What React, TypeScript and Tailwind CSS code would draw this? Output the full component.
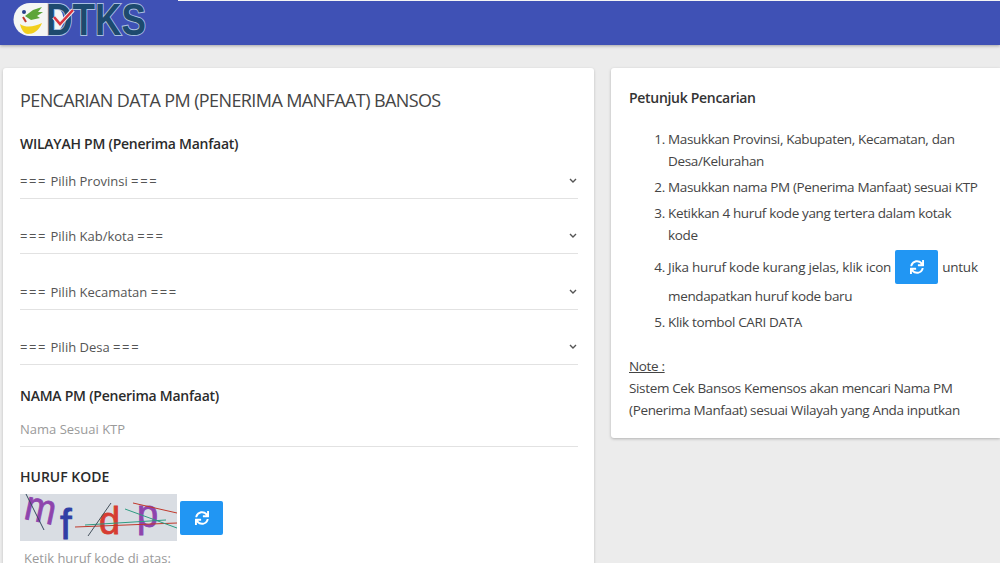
import { FaSync } from 'react-icons/fa';

const FONT = "font-['Open_Sans','Noto_Sans',sans-serif]";

const SELECTS = ['Pilih Provinsi', 'Pilih Kab/kota', 'Pilih Kecamatan', 'Pilih Desa'];

const Logo = () => (
  <svg width="150" height="40" viewBox="0 0 150 40" className="block overflow-visible">
    <rect x="13.5" y="3" width="50" height="33" rx="16.5" fill="#f4f6f4" />
    <path d="M25 16 L33 10 L42 7 L38 12 L43 12 L37 16 L40 18 L31 20 Z" fill="#5da53a" />
    <circle cx="24" cy="12" r="2" fill="#27408b" />
    <path d="M23 17 L26 22" stroke="#c0392b" strokeWidth="2" />
    <path d="M20 24 C26 28 34 27 42 23 C39 31 33 34 28 34 C24 34 21 29 20 24 Z" fill="#f2cf1d" />
    <text x="46" y="35" fontFamily="'Liberation Sans', sans-serif" fontWeight="700" fontSize="45" textLength="100" lengthAdjust="spacingAndGlyphs" fill="#1d4a6e" stroke="#a9bfe0" strokeWidth="2" paintOrder="stroke">
      DTKS
    </text>
    <path d="M54 17 L60 24 L73 10" fill="none" stroke="#f0f0f0" strokeWidth="4.5" />
    <path d="M54 17 L60 24 L73 10" fill="none" stroke="#d8343f" strokeWidth="2.5" />
  </svg>
);

const Captcha = () => (
  <svg width="157" height="47" viewBox="0 0 157 47" className="block overflow-visible bg-[#d9dde3]">
    <g fontFamily="'Liberation Sans', sans-serif" strokeWidth="0.8">
      <text x="4" y="27" fontSize="42" fill="#8e44ad" stroke="#8e44ad" transform="rotate(12 15 20)" textLength="31" lengthAdjust="spacingAndGlyphs">m</text>
      <text x="40" y="45" fontSize="42" fill="#2f3fa5" stroke="#2f3fa5">f</text>
      <text x="79" y="40" fontSize="38" fill="#d63c32" stroke="#d63c32">d</text>
      <text x="117" y="33" fontSize="38" fill="#8e44ad" stroke="#8e44ad">p</text>
    </g>
    <g fill="none" strokeWidth="1">
      <path d="M6 0 L24 36" stroke="#34495e" />
      <path d="M55 33 L157 29" stroke="#c0392b" />
      <path d="M65 31 L146 26" stroke="#2e9c82" />
      <path d="M68 42 L91 9" stroke="#44505c" />
      <path d="M113 9 L157 19" stroke="#c0392b" />
      <path d="M105 15 L157 34" stroke="#2e9c82" />
    </g>
  </svg>
);

const RefreshButton = ({ className }: { className: string }) => (
  <span className={`inline-flex items-center justify-center rounded-[2px] bg-[#2196f3] text-white text-[14px] ${className}`}>
    <FaSync />
  </span>
);

export default function App() {
  return (
    <div className={`${FONT} h-[563px] w-[1000px] overflow-hidden bg-[#ececec] text-[#444]`}>
      <header className="h-[45px] border-t border-[#f4f4f4] bg-[#3f51b5] shadow-[0_1px_3px_rgba(0,0,0,0.3)]">
        <div className="-mt-px h-[44px] w-[178px] bg-[#3f51b5]">
          <Logo />
        </div>
      </header>

      <main className="flex items-start pl-[3px] pt-[23px]">
        <section className="h-[600px] w-[591px] shrink-0 rounded-t-[3px] bg-white pl-[17px] pr-[16px] pt-[20px] shadow-[0_1px_3px_rgba(0,0,0,0.2)]">
          <h1 className="text-[18px] leading-[24px] tracking-[-0.6px] text-[#454545]">
            PENCARIAN DATA PM (PENERIMA MANFAAT) BANSOS
          </h1>
          <h2 className="mb-px mt-[22px] text-[14px] font-semibold leading-[20px] tracking-[-0.25px] text-[#2b2b2b]">
            WILAYAH PM (Penerima Manfaat)
          </h2>
          <div className="flex flex-col gap-[11.4px]">
            {SELECTS.map((label) => (
              <div key={label} className="flex h-[44px] items-end justify-between border-b border-[#e2e2e2] pb-[7px] pr-[1px] text-[13px] leading-[20px] text-[#555]">
                <span>
                  <span className="tracking-[1.6px]">===</span> {label} <span className="tracking-[1.6px]">===</span>
                </span>
                <svg width="8" height="6" viewBox="0 0 8 6" className="mb-[7px]" fill="none" stroke="#555" strokeWidth="1.4">
                  <path d="M1 1 L4 4 L7 1" />
                </svg>
              </div>
            ))}
          </div>
          <h2 className="mt-[21px] text-[14px] font-semibold leading-[20px] tracking-[-0.25px] text-[#2b2b2b]">NAMA PM (Penerima Manfaat)</h2>
          <div className="mt-[9px] flex h-[32px] items-center border-b border-[#e2e2e2] pb-[2px] text-[13px] text-[#9a9a9a]">
            Nama Sesuai KTP
          </div>
          <h2 className="mt-[20px] text-[14px] font-semibold leading-[20px] text-[#2b2b2b]">HURUF KODE</h2>
          <div className="mt-[7px] flex items-center gap-[3px]">
            <Captcha />
            <RefreshButton className="mt-[1px] h-[34px] w-[43px]" />
          </div>
          <div className="ml-[4px] mt-[7px] text-[13px] leading-[20px] text-[#9a9a9a]">Ketik huruf kode di atas:</div>
        </section>

        <aside className="ml-[17px] h-[370px] w-[389px] shrink-0 rounded-l-[3px] bg-white pl-[18px] pr-[20px] pt-[20px] text-[13.5px] tracking-[-0.35px] text-[#444] shadow-[0_1px_3px_rgba(0,0,0,0.25)]">
          <h3 className="text-[14px] font-semibold leading-[20px] tracking-[-0.3px] text-[#333]">Petunjuk Pencarian</h3>
          <ol className="mt-[20px] list-decimal pl-[39px] leading-[22px]">
            <li className="mb-[4px]">Masukkan Provinsi, Kabupaten, Kecamatan, dan Desa/Kelurahan</li>
            <li className="mb-[4px]">Masukkan nama PM (Penerima Manfaat) sesuai KTP</li>
            <li className="mb-[4px]">Ketikkan 4 huruf kode yang tertera dalam kotak kode</li>
            <li className="mb-[4px]">
              <div className="flex h-[34px] items-center gap-[4px] whitespace-nowrap tracking-[-0.22px]">
                Jika huruf kode kurang jelas, klik icon
                <RefreshButton className="h-[34px] w-[43px]" />
                untuk
              </div>
              <div className="mt-[1px]">mendapatkan huruf kode baru</div>
            </li>
            <li>Klik tombol CARI DATA</li>
          </ol>
          <p className="mt-[22px] leading-[22px] underline">Note :</p>
          <p className="leading-[22px]">Sistem Cek Bansos Kemensos akan mencari Nama PM (Penerima Manfaat) sesuai Wilayah yang Anda inputkan</p>
        </aside>
      </main>
    </div>
  );
}
